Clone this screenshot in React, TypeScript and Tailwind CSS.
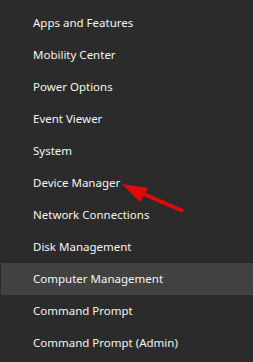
const items = [
  "Apps and Features",
  "Mobility Center",
  "Power Options",
  "Event Viewer",
  "System",
  "Device Manager",
  "Network Connections",
  "Disk Management",
  "Computer Management",
  "Command Prompt",
  "Command Prompt (Admin)",
];

export default function App() {
  return (
    <div className="relative w-[253px] h-[362px] bg-[#2b2b2b] pt-[7px] font-['Noto_Sans',sans-serif] text-[11.5px] text-[#f4f4f4] overflow-hidden">
      <ul className="flex flex-col">
        {items.map((label) => (
          <li
            key={label}
            className={`h-[32px] flex items-center ${
              label === "Computer Management" ? "ml-[1px] pl-[32px] bg-[#414141]" : "pl-[33px]"
            }`}
          >
            {label}
          </li>
        ))}
      </ul>
      {/* red arrow pointing at Device Manager */}
      <svg className="absolute left-0 top-0" width="253" height="362" viewBox="0 0 253 362">
        <line x1="183" y1="211" x2="132" y2="189" stroke="#e00a0a" strokeWidth="4" />
        <polygon points="122,184 148,188 140,202" fill="#e00a0a" />
      </svg>
    </div>
  );
}
